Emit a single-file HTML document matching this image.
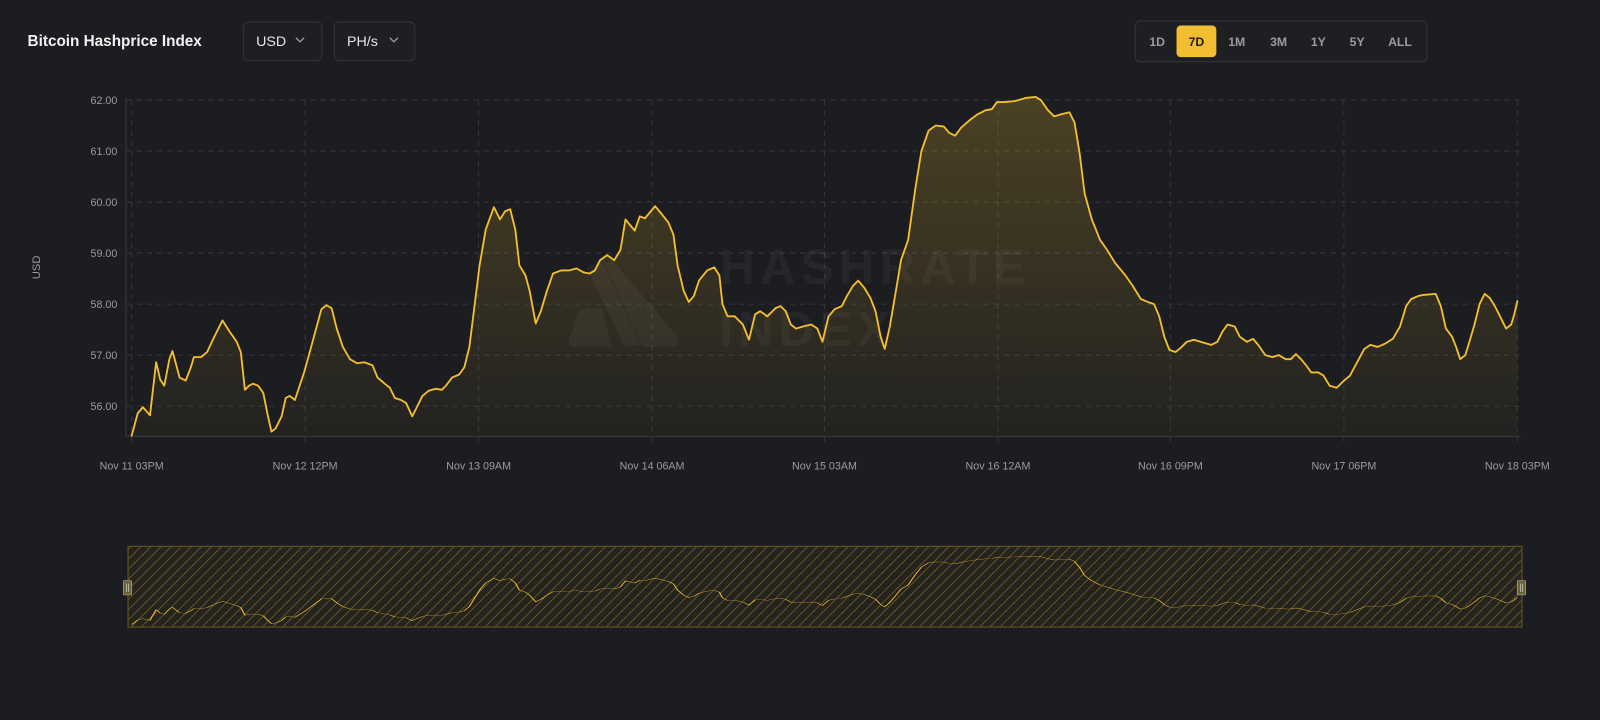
<!DOCTYPE html>
<html><head><meta charset="utf-8"><style>
html,body{margin:0;padding:0;background:#1c1d20;width:1600px;height:720px;overflow:hidden}
svg{display:block}
text{font-family:"Liberation Sans",sans-serif}
</style></head><body>
<svg width="1600" height="720" viewBox="0 0 1568 705.6" xmlns="http://www.w3.org/2000/svg">
<defs>
<linearGradient id="g" x1="0" y1="0" x2="0" y2="1">
<stop offset="0" stop-color="#f0bf2f" stop-opacity="0.22"/>
<stop offset="1" stop-color="#f0bf2f" stop-opacity="0.03"/>
</linearGradient>
<pattern id="h" width="7" height="7" patternUnits="userSpaceOnUse" patternTransform="rotate(45)">
<rect width="7" height="7" fill="#25231d"/>
<line x1="0" y1="0" x2="0" y2="7" stroke="#73622e" stroke-width="1.5"/>
</pattern>
<clipPath id="navclip"><rect x="125" y="535" width="1367" height="80"/></clipPath>
<polyline id="L" points="129,427 135,405 140,399 147,407 153,355 157,372 161,378 166,352 169,344 172,355 176,370 182,373 187,360 190,350 197,350 203,345 210,330 218,314 225,325 232,335 236,345 240,382 244,378 248,376 253,378 258,385 262,405 266,423 270,420 276,408 280,390 284,388 289,392 293,380 298,365 303,347 309,325 315,303 320,299 325,302 330,322 336,340 343,352 350,356 357,355 365,358 370,370 377,376 382,380 387,390 393,392 398,395 404,408 409,398 414,388 420,383 427,381 433,382 437,378 443,370 450,367 455,360 460,340 465,300 470,260 476,225 484,203 490,215 495,207 500,205 505,225 509,260 515,270 519,285 525,317 530,305 536,285 542,268 550,265 558,265 565,263 572,267 578,268 583,265 588,255 595,250 602,255 608,245 613,215 617,220 622,226 627,212 632,214 637,208 642,202 647,208 655,218 660,230 664,260 670,285 675,296 680,290 685,275 693,265 700,262 705,270 708,298 713,310 720,310 728,318 734,333 740,308 745,305 752,310 760,302 765,300 770,305 775,318 780,322 787,320 795,318 801,322 806,335 812,310 818,303 825,300 830,290 836,280 841,275 847,282 853,292 858,305 863,330 867,342 872,320 878,285 883,255 890,235 897,185 903,148 910,128 917,123 925,124 930,130 936,133 942,125 950,118 958,112 966,108 972,107 977,100 985,100 995,99 1005,96 1015,95 1020,98 1027,108 1033,114 1040,112 1048,110 1053,120 1058,150 1063,190 1070,215 1078,235 1085,245 1093,258 1103,270 1110,280 1118,293 1125,296 1131,298 1136,310 1141,330 1146,343 1152,345 1158,340 1163,335 1170,333 1180,336 1187,338 1193,335 1198,325 1203,318 1210,320 1215,330 1222,335 1228,332 1233,338 1240,348 1247,350 1253,348 1260,352 1265,352 1270,347 1275,352 1280,358 1285,365 1292,365 1297,368 1303,378 1310,380 1316,374 1323,368 1330,355 1337,342 1343,338 1350,340 1357,337 1365,332 1372,320 1378,300 1383,293 1390,290 1395,289 1407,288 1412,300 1417,322 1423,330 1427,340 1431,352 1436,348 1440,335 1445,318 1450,298 1455,288 1460,292 1465,300 1470,310 1476,322 1481,318 1484,308 1487,295"/>
</defs>

<!-- header -->
<text x="27" y="45" font-size="15" font-weight="bold" fill="#f2f2f2">Bitcoin Hashprice Index</text>
<rect x="238.5" y="21.5" width="77" height="38" rx="5" fill="#1e1f22" stroke="#33353a"/>
<text x="251" y="45" font-size="14" fill="#e6e6e6">USD</text>
<path d="M290 37 l4 4 l4 -4" fill="none" stroke="#9a9ba0" stroke-width="1.3"/>
<rect x="327.5" y="21.5" width="79" height="38" rx="5" fill="#1e1f22" stroke="#33353a"/>
<text x="340" y="45" font-size="14" fill="#e6e6e6">PH/s</text>
<path d="M382 37 l4 4 l4 -4" fill="none" stroke="#9a9ba0" stroke-width="1.3"/>

<rect x="1112.5" y="20.5" width="286" height="40" rx="5" fill="#1e1f22" stroke="#33353a"/>
<rect x="1153" y="25" width="39" height="31" rx="4" fill="#f2bd31"/>
<g font-size="12" font-weight="bold" fill="#9a9ca2" text-anchor="middle">
<text x="1134" y="45">1D</text>
<text x="1172.5" y="45" fill="#1c1d20">7D</text>
<text x="1212" y="45">1M</text>
<text x="1253" y="45">3M</text>
<text x="1292" y="45">1Y</text>
<text x="1330" y="45">5Y</text>
<text x="1372" y="45">ALL</text>
</g>

<!-- grid -->
<g stroke="#34363b" stroke-width="1" stroke-dasharray="5,5" fill="none">
<path d="M124 98H1490M124 148H1490M124 198H1490M124 248H1490M124 298H1490M124 348H1490M124 398H1490"/>
<path d="M129 98V433M299 98V433M469 98V433M639 98V433M808 98V433M978 98V433M1147 98V433M1317 98V433M1487 98V433"/>
</g>
<path d="M123.5 96V427.5H1490" stroke="#3a3c41" fill="none"/>
<g font-size="10.5" fill="#9a9ba0" text-anchor="end">
<text x="115" y="102">62.00</text><text x="115" y="152">61.00</text><text x="115" y="202">60.00</text>
<text x="115" y="252">59.00</text><text x="115" y="302">58.00</text><text x="115" y="352">57.00</text><text x="115" y="402">56.00</text>
</g>
<text transform="translate(39,262) rotate(-90)" font-size="11" fill="#9a9ba0" text-anchor="middle">USD</text>
<g font-size="10.5" fill="#9a9ba0" text-anchor="middle">
<text x="129" y="460">Nov 11 03PM</text><text x="299" y="460">Nov 12 12PM</text><text x="469" y="460">Nov 13 09AM</text>
<text x="639" y="460">Nov 14 06AM</text><text x="808" y="460">Nov 15 03AM</text><text x="978" y="460">Nov 16 12AM</text>
<text x="1147" y="460">Nov 16 09PM</text><text x="1317" y="460">Nov 17 06PM</text><text x="1487" y="460">Nov 18 03PM</text>
</g>

<!-- watermark -->
<g fill="#ffffff" fill-opacity="0.045">
<path d="M575 262 L590 256 L628 338 L612 340 Z" />
<path d="M592 258 Q600 252 606 262 L664 330 Q668 340 656 340 L630 340 Z"/>
<path d="M565 310 Q568 302 578 302 L590 302 L600 340 L562 340 Q556 340 558 332 Z"/>
<text x="705" y="278" font-size="48" font-weight="bold" letter-spacing="5" textLength="305" lengthAdjust="spacing">HASHRATE</text>
<text x="705" y="339" font-size="48" font-weight="bold" letter-spacing="5" textLength="172" lengthAdjust="spacing">INDEX</text>
</g>

<!-- area + line -->
<polygon points="129,427 135,405 140,399 147,407 153,355 157,372 161,378 166,352 169,344 172,355 176,370 182,373 187,360 190,350 197,350 203,345 210,330 218,314 225,325 232,335 236,345 240,382 244,378 248,376 253,378 258,385 262,405 266,423 270,420 276,408 280,390 284,388 289,392 293,380 298,365 303,347 309,325 315,303 320,299 325,302 330,322 336,340 343,352 350,356 357,355 365,358 370,370 377,376 382,380 387,390 393,392 398,395 404,408 409,398 414,388 420,383 427,381 433,382 437,378 443,370 450,367 455,360 460,340 465,300 470,260 476,225 484,203 490,215 495,207 500,205 505,225 509,260 515,270 519,285 525,317 530,305 536,285 542,268 550,265 558,265 565,263 572,267 578,268 583,265 588,255 595,250 602,255 608,245 613,215 617,220 622,226 627,212 632,214 637,208 642,202 647,208 655,218 660,230 664,260 670,285 675,296 680,290 685,275 693,265 700,262 705,270 708,298 713,310 720,310 728,318 734,333 740,308 745,305 752,310 760,302 765,300 770,305 775,318 780,322 787,320 795,318 801,322 806,335 812,310 818,303 825,300 830,290 836,280 841,275 847,282 853,292 858,305 863,330 867,342 872,320 878,285 883,255 890,235 897,185 903,148 910,128 917,123 925,124 930,130 936,133 942,125 950,118 958,112 966,108 972,107 977,100 985,100 995,99 1005,96 1015,95 1020,98 1027,108 1033,114 1040,112 1048,110 1053,120 1058,150 1063,190 1070,215 1078,235 1085,245 1093,258 1103,270 1110,280 1118,293 1125,296 1131,298 1136,310 1141,330 1146,343 1152,345 1158,340 1163,335 1170,333 1180,336 1187,338 1193,335 1198,325 1203,318 1210,320 1215,330 1222,335 1228,332 1233,338 1240,348 1247,350 1253,348 1260,352 1265,352 1270,347 1275,352 1280,358 1285,365 1292,365 1297,368 1303,378 1310,380 1316,374 1323,368 1330,355 1337,342 1343,338 1350,340 1357,337 1365,332 1372,320 1378,300 1383,293 1390,290 1395,289 1407,288 1412,300 1417,322 1423,330 1427,340 1431,352 1436,348 1440,335 1445,318 1450,298 1455,288 1460,292 1465,300 1470,310 1476,322 1481,318 1484,308 1487,295 1487,427" fill="url(#g)"/>
<use href="#L" fill="none" stroke="#f3bf2f" stroke-width="1.8" stroke-linejoin="round" stroke-linecap="round"/>

<!-- navigator -->
<rect x="125" y="535" width="1367" height="80" fill="url(#h)"/>
<g clip-path="url(#navclip)">
<use href="#L" transform="translate(0,525.8) scale(1,0.2018)" fill="none" stroke="#f3bf2f" stroke-width="1.2" vector-effect="non-scaling-stroke"/>
</g>
<rect x="125.5" y="535.5" width="1366" height="79" fill="none" stroke="#5e4f22" stroke-width="1.2"/>
<rect x="121" y="569" width="8" height="14" rx="1" fill="#6e6232" stroke="#9a9a9a" stroke-width="0.8"/>
<path d="M124 572V580M126 572V580" stroke="#cccccc" stroke-width="0.7"/>
<rect x="1487" y="569" width="8" height="14" rx="1" fill="#6e6232" stroke="#9a9a9a" stroke-width="0.8"/>
<path d="M1490 572V580M1492 572V580" stroke="#cccccc" stroke-width="0.7"/>
</svg>
</body></html>
